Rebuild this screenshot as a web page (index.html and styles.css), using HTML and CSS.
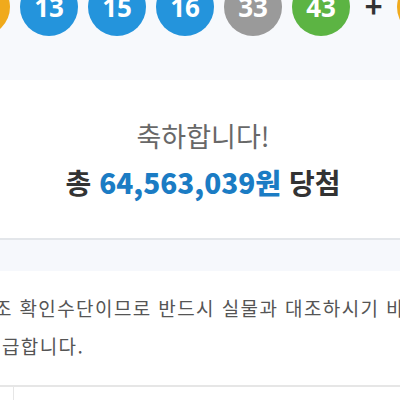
FILE: index.html
```html
<!DOCTYPE html>
<html lang="ko">

<head>
    <meta charset="UTF-8">
    <meta name="viewport" content="width=device-width, initial-scale=1.0">
    <title>당첨 결과</title>
    <link rel="stylesheet" href="styles.css">
</head>

<body>
    <div class="numbers">
        <div class="balls">
            <span class="ball yellow">7</span>
            <span class="ball blue">13</span>
            <span class="ball blue">15</span>
            <span class="ball blue">16</span>
            <span class="ball gray">33</span>
            <span class="ball green">43</span>
            <span class="plus">+</span>
            <span class="ball yellow">5</span>
        </div>
    </div>

    <div class="result">
        <p class="congrats">축하합니다!</p>
        <p class="prize">총 <strong>64,563,039원</strong> 당첨</p>
    </div>

    <div class="divider"></div>

    <div class="notice">
        <p class="line first">보조 확인수단이므로 반드시 실물과 대조하시기 바랍니다.</p>
        <p class="line second">지급합니다.</p>
    </div>

    <div class="table">
        <div class="cell narrow"></div>
        <div class="cell"></div>
    </div>
</body>

</html>
```

FILE: styles.css
```css
body {
    margin: 0;
    padding: 0;
    font-family: "Noto Sans CJK KR", "Noto Sans", sans-serif;
    background-color: #fff;
    overflow: hidden;
    width: 400px;
    height: 400px;
}

.numbers {
    background-color: #f7f9fc;
    height: 80px;
    overflow: hidden;
}

.balls {
    display: flex;
    align-items: center;
    gap: 10px;
    margin-left: -48px;
    margin-top: -22px;
    width: 600px;
}

.ball {
    flex: none;
    width: 58px;
    height: 58px;
    border-radius: 50%;
    color: #fff;
    font-family: "Noto Sans", sans-serif;
    font-weight: 700;
    font-size: 26px;
    display: flex;
    align-items: center;
    justify-content: center;
}

.yellow { background-color: #f0aa1c; }
.blue { background-color: #2494dc; }
.gray { background-color: #9a9a9a; }
.green { background-color: #5cb443; }

.plus {
    flex: none;
    width: 27px;
    text-align: center;
    font-size: 30px;
    font-weight: 700;
    color: #333;
    line-height: 1;
    margin-top: -4px;
}

.result {
    height: 160px;
    text-align: center;
    border-bottom: 2px solid #e3e6ea;
    box-sizing: border-box;
    padding-top: 36px;
    padding-left: 6px;
}

.result p {
    margin: 0;
}

.congrats {
    font-size: 27px;
    color: #686868;
    line-height: 40px;
}

.prize {
    font-size: 28px;
    font-weight: 700;
    color: #333;
    line-height: 44px;
    margin-top: 4px !important;
}

.prize strong {
    color: #1b7cc4;
}

.divider {
    height: 31px;
    background-color: #f6f8fc;
}

.notice {
    padding-top: 18px;
    height: 96px;
    overflow: hidden;
}

.line {
    margin: 0;
    white-space: nowrap;
    font-size: 19px;
    letter-spacing: 1.4px;
    line-height: 38px;
    color: #555;
}

.first {
    margin-left: -25px;
}

.second {
    margin-left: -17px;
}

.table {
    display: flex;
    border-top: 2px solid #e6e6e6;
    height: 40px;
}

.cell.narrow {
    width: 13px;
    border-right: 1px solid #e6e6e6;
}
```
